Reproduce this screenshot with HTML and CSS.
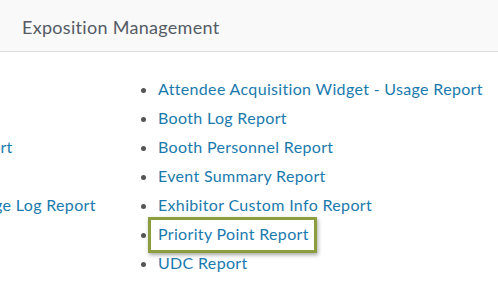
FILE: index.html
```html
<!DOCTYPE html>
<html>
<head>
<meta charset="utf-8">
<link rel="stylesheet" href="styles.css">
</head>
<body>
<div class="header">Exposition Management</div>
<div class="content">
  <ul class="reports left">
    <li class="blank"></li>
    <li class="blank"></li>
    <li><a>Scans Report</a></li>
    <li class="blank"></li>
    <li><a>Badge Usage Log Report</a></li>
    <li class="blank"></li>
    <li class="blank"></li>
  </ul>
  <ul class="reports right">
    <li><a>Attendee Acquisition Widget - Usage Report</a></li>
    <li><a>Booth Log Report</a></li>
    <li><a>Booth Personnel Report</a></li>
    <li><a>Event Summary Report</a></li>
    <li><a>Exhibitor Custom Info Report</a></li>
    <li><a class="highlight">Priority Point Report</a></li>
    <li><a>UDC Report</a></li>
  </ul>
</div>
</body>
</html>
```
FILE: styles.css
```css
html, body { margin: 0; padding: 0; background: #fff; }
body { font-family: Lato, "Open Sans", sans-serif; overflow: hidden; width: 498px; height: 285px; }
.header {
  height: 52px;
  box-sizing: border-box;
  background: #f9f9f9;
  border-bottom: 1px solid #dedede;
  padding-left: 22px;
  display: flex;
  align-items: center;
  font-size: 18px;
  letter-spacing: 0.3px;
  color: #545b66;
  padding-top: 2px;
}
.content { display: flex; padding-top: 22px; }
.reports { list-style: disc; margin: 0; padding: 0 0 0 16px; color: #555; }
.reports li { font-size: 16px; line-height: 29px; letter-spacing: 0.33px; }
.reports li.blank { height: 29px; list-style: none; }
.reports a { color: #1a7aae; }
.left { margin-left: -99px; width: 225px; flex: none; }
.right { flex: none; }
.highlight { position: relative; }
.highlight::after {
  content: "";
  position: absolute;
  left: -10px; right: -8px; top: -7px; bottom: -10px;
  border: 3px solid #8b9d3c;
  box-shadow: 1px 2px 4px rgba(0,0,0,0.35);
}
```
